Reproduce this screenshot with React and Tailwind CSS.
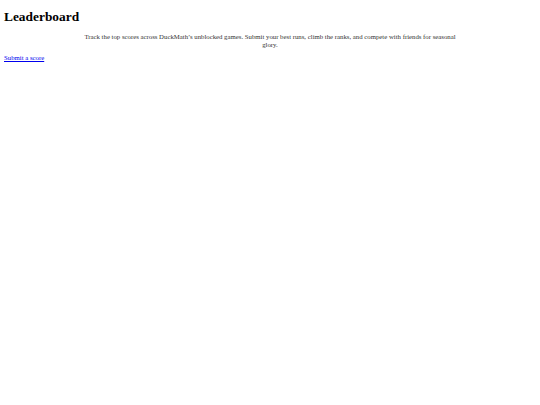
export default function App() {
  return (
    <div className="min-h-screen bg-white px-[4px] pt-[9px] font-['Liberation_Serif',serif] text-black">
      <h1 className="text-[13.4px] font-bold leading-[16px]">Leaderboard</h1>
      <p className="mx-auto mt-[8px] max-w-[378px] text-center text-[6.78px] leading-[8px] text-[#333]">
        Track the top scores across DuckMath’s unblocked games. Submit your best runs, climb the ranks, and compete
        with friends for seasonal glory.
      </p>
      <a href="#submit" className="mt-[5px] block w-fit text-[6.78px] leading-[8px] text-[#0000ee] underline">
        Submit a score
      </a>
    </div>
  );
}
